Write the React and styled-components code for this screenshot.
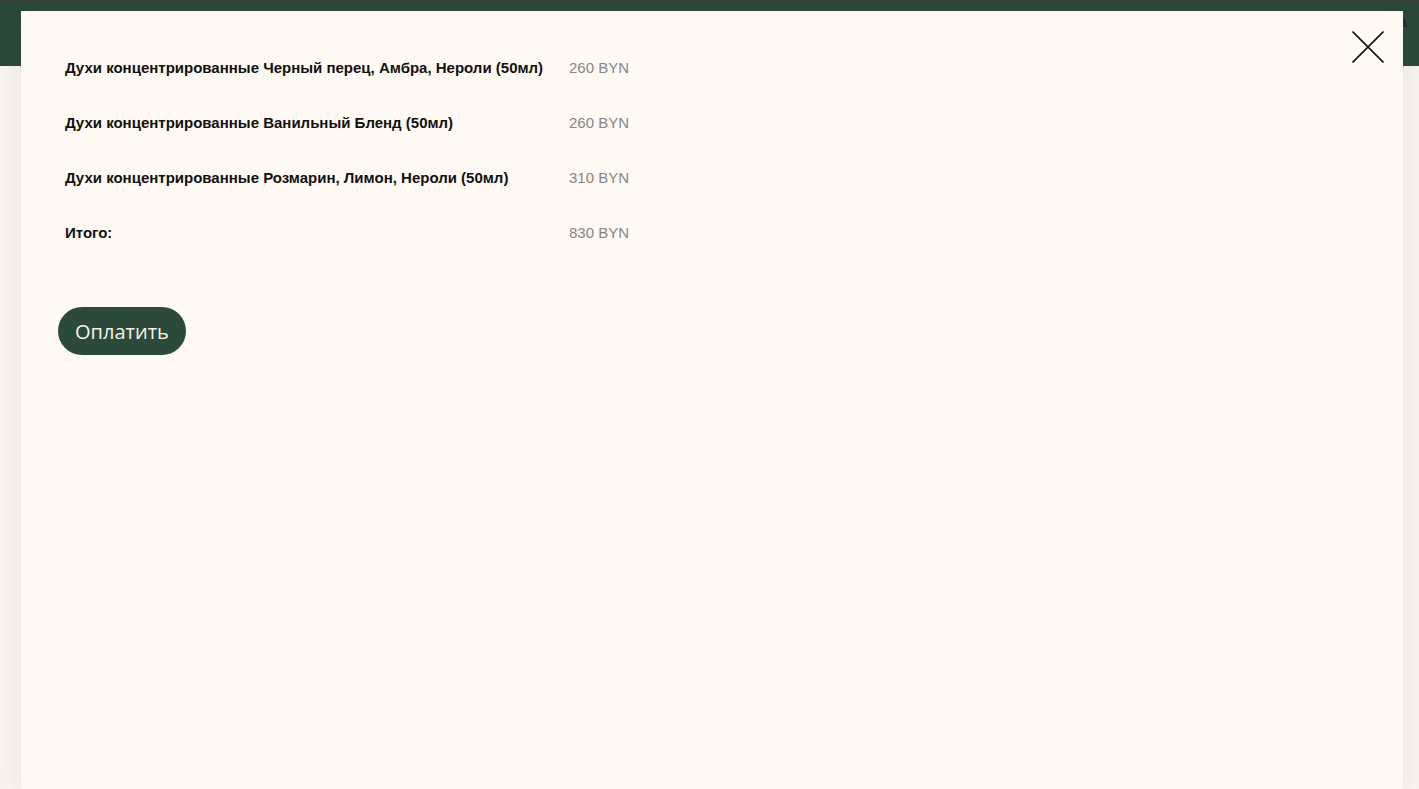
import React from "react";
import styled, { createGlobalStyle } from "styled-components";

const GlobalStyle = createGlobalStyle`
  html, body {
    margin: 0;
    padding: 0;
    height: 100%;
    background: #f8f4ed;
    font-family: "Liberation Sans", Arial, sans-serif;
    overflow: hidden;
  }
`;

const Page = styled.div`
  position: relative;
  height: 789px;
  background: #f8f4ed;
`;

const Header = styled.header`
  height: 66px;
  background: #2b4a39;
  border-top: 2px solid #3e403e;
  display: flex;
  justify-content: flex-end;
  align-items: flex-start;
  padding: 12px 12px 0 0;
  box-sizing: border-box;
`;

const HeaderLink = styled.span`
  font-size: 14px;
  font-weight: 700;
  color: #1c2a36;
`;

const Modal = styled.div`
  position: absolute;
  top: 11px;
  left: 21px;
  right: 16px;
  bottom: 0;
  background: #fef9f2;
  box-shadow: 0 0 22px rgba(60, 50, 30, 0.09);
  padding: 29px 37px;
  box-sizing: border-box;
`;

const Close = styled.button`
  position: absolute;
  top: 20px;
  right: 19px;
  width: 32px;
  height: 32px;
  padding: 0;
  border: none;
  background: none;
  cursor: pointer;
`;

const Table = styled.table`
  border-collapse: collapse;
  border-spacing: 0;
`;

const Name = styled.td`
  width: 490px;
  padding: 19px 7px;
  font-size: 15px;
  line-height: 17px;
  font-weight: 700;
  color: #111;
  white-space: nowrap;
`;

const Price = styled.td`
  padding: 19px 7px;
  font-size: 15px;
  line-height: 17px;
  color: #858585;
  white-space: nowrap;
`;

const PayButton = styled.button`
  margin-top: 47px;
  height: 48px;
  padding: 0 17px;
  border: none;
  border-radius: 24px;
  background: #2b4a39;
  color: #f6f2ea;
  font-family: "Open Sans", "Noto Sans", sans-serif;
  font-size: 20px;
  cursor: pointer;
`;

const items = [
  { name: "Духи концентрированные Черный перец, Амбра, Нероли (50мл)", price: "260 BYN" },
  { name: "Духи концентрированные Ванильный Бленд (50мл)", price: "260 BYN" },
  { name: "Духи концентрированные Розмарин, Лимон, Нероли (50мл)", price: "310 BYN" },
  { name: "Итого:", price: "830 BYN" },
];

const App = () => (
  <Page>
    <GlobalStyle />
    <Header>
      <HeaderLink>Корзина</HeaderLink>
    </Header>
    <Modal>
      <Close aria-label="Закрыть">
        <svg width="32" height="32" viewBox="0 0 32 32">
          <path d="M0.5 0.5 L31.5 31.5 M31.5 0.5 L0.5 31.5" stroke="#111" strokeWidth="1.6" fill="none" />
        </svg>
      </Close>
      <Table>
        <tbody>
          {items.map((it) => (
            <tr key={it.name}>
              <Name>{it.name}</Name>
              <Price>{it.price}</Price>
            </tr>
          ))}
        </tbody>
      </Table>
      <PayButton>Оплатить</PayButton>
    </Modal>
  </Page>
);

export default App;
